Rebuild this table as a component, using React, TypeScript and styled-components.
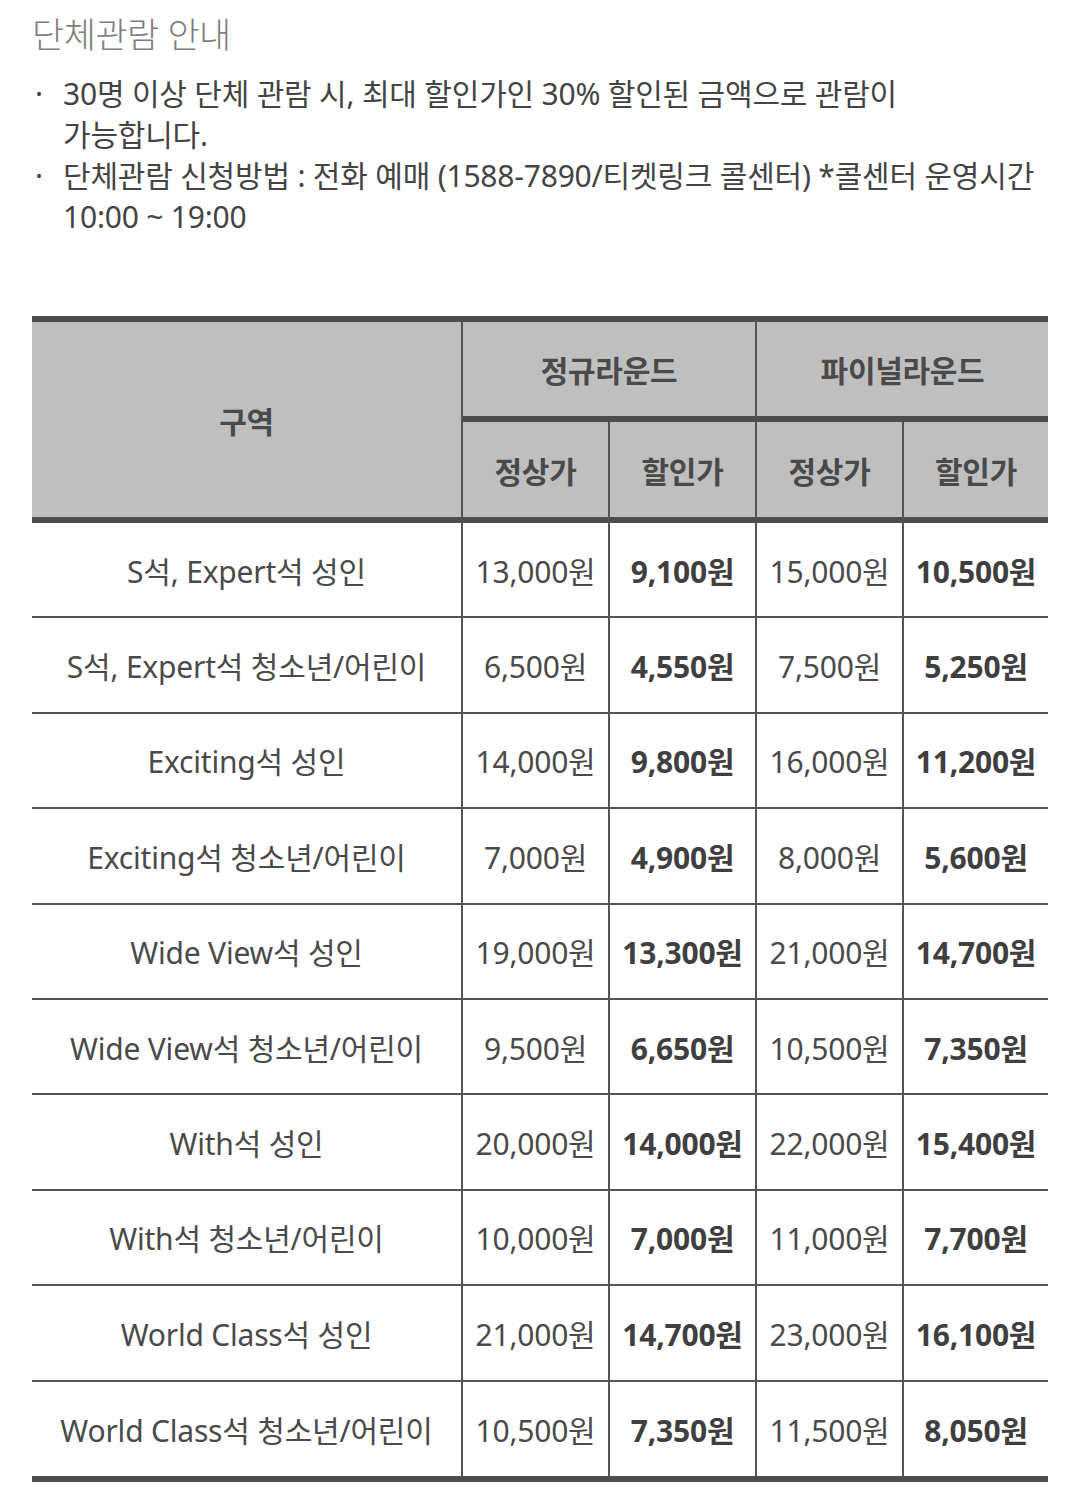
import React from "react";
import styled, { createGlobalStyle } from "styled-components";

const GlobalStyle = createGlobalStyle`
  html, body {
    margin: 0;
    padding: 0;
    background: #ffffff;
  }
  body {
    font-family: "Noto Sans", "Noto Sans CJK KR", sans-serif;
    color: #444444;
  }
  * { box-sizing: border-box; }
`;

const Page = styled.div`
  width: 1077px;
  padding: 13px 29px 28px 32px;
`;

const Title = styled.h2`
  margin: 0;
  font-size: 35px;
  line-height: 44px;
  font-weight: 300;
  color: #7d7d7d;
  letter-spacing: -0.5px;
`;

const List = styled.ul`
  list-style: none;
  margin: 16px 0 0;
  padding: 0;
`;

const Item = styled.li`
  display: flex;
  font-size: 30px;
  line-height: 41px;
  color: #444444;
`;

const Bullet = styled.span`
  flex: 0 0 31px;
  padding-left: 3px;
`;

const ItemText = styled.span`
  flex: 1;
  white-space: nowrap;
  letter-spacing: -0.2px;
`;

const Table = styled.div`
  margin-top: 79px;
  width: 1016px;
  display: grid;
  grid-template-columns: 429px 147px 147px 147px 146px;
  grid-template-rows: 100px 101px repeat(9, 95.4px) 94px;
  border-top: 6px solid #4f4d4b;
  border-bottom: 6px solid #4f4d4b;
`;

const HeadCell = styled.div<{ $first?: boolean; $span?: number; $rows?: number }>`
  grid-column: ${(p) => (p.$span ? `span ${p.$span}` : "auto")};
  grid-row: ${(p) => (p.$rows ? `span ${p.$rows}` : "auto")};
  background: #bfbfbf;
  border-bottom: 6px solid #4f4d4b;
  border-left: ${(p) => (p.$first ? "none" : "2px solid #555555")};
  display: flex;
  align-items: center;
  justify-content: center;
  font-size: 30px;
  font-weight: 700;
  color: #4a4a4a;
  letter-spacing: -0.3px;
`;

const Cell = styled.div<{ $first?: boolean; $bold?: boolean; $last?: boolean }>`
  border-bottom: ${(p) => (p.$last ? "none" : "2px solid #555555")};
  border-left: ${(p) => (p.$first ? "none" : "2px solid #555555")};
  display: flex;
  align-items: center;
  justify-content: center;
  font-size: 30px;
  font-weight: ${(p) => (p.$bold ? 700 : 400)};
  color: ${(p) => (p.$bold ? "#3f3f3f" : "#4a4a4a")};
  white-space: nowrap;
  letter-spacing: -0.2px;
`;

type Row = { zone: string; p1: string; d1: string; p2: string; d2: string };

const rows: Row[] = [
  { zone: "S석, Expert석 성인", p1: "13,000원", d1: "9,100원", p2: "15,000원", d2: "10,500원" },
  { zone: "S석, Expert석 청소년/어린이", p1: "6,500원", d1: "4,550원", p2: "7,500원", d2: "5,250원" },
  { zone: "Exciting석 성인", p1: "14,000원", d1: "9,800원", p2: "16,000원", d2: "11,200원" },
  { zone: "Exciting석 청소년/어린이", p1: "7,000원", d1: "4,900원", p2: "8,000원", d2: "5,600원" },
  { zone: "Wide View석 성인", p1: "19,000원", d1: "13,300원", p2: "21,000원", d2: "14,700원" },
  { zone: "Wide View석 청소년/어린이", p1: "9,500원", d1: "6,650원", p2: "10,500원", d2: "7,350원" },
  { zone: "With석 성인", p1: "20,000원", d1: "14,000원", p2: "22,000원", d2: "15,400원" },
  { zone: "With석 청소년/어린이", p1: "10,000원", d1: "7,000원", p2: "11,000원", d2: "7,700원" },
  { zone: "World Class석 성인", p1: "21,000원", d1: "14,700원", p2: "23,000원", d2: "16,100원" },
  { zone: "World Class석 청소년/어린이", p1: "10,500원", d1: "7,350원", p2: "11,500원", d2: "8,050원" },
];

export default function App() {
  return (
    <>
      <GlobalStyle />
      <Page>
        <Title>단체관람 안내</Title>
        <List>
          <Item>
            <Bullet>·</Bullet>
            <ItemText>
              30명 이상 단체 관람 시, 최대 할인가인 30% 할인된 금액으로 관람이
              <br />
              가능합니다.
            </ItemText>
          </Item>
          <Item>
            <Bullet>·</Bullet>
            <ItemText>
              단체관람 신청방법 : 전화 예매 (1588-7890/티켓링크 콜센터) *콜센터 운영시간
              <br />
              10:00 ~ 19:00
            </ItemText>
          </Item>
        </List>
        <Table>
          <HeadCell $first $rows={2}>구역</HeadCell>
          <HeadCell $span={2}>정규라운드</HeadCell>
          <HeadCell $span={2}>파이널라운드</HeadCell>
          <HeadCell>정상가</HeadCell>
          <HeadCell>할인가</HeadCell>
          <HeadCell>정상가</HeadCell>
          <HeadCell>할인가</HeadCell>
          {rows.map((r, i) => {
            const last = i === rows.length - 1;
            return (
              <React.Fragment key={r.zone}>
                <Cell $first $last={last}>{r.zone}</Cell>
                <Cell $last={last}>{r.p1}</Cell>
                <Cell $last={last} $bold>{r.d1}</Cell>
                <Cell $last={last}>{r.p2}</Cell>
                <Cell $last={last} $bold>{r.d2}</Cell>
              </React.Fragment>
            );
          })}
        </Table>
      </Page>
    </>
  );
}
